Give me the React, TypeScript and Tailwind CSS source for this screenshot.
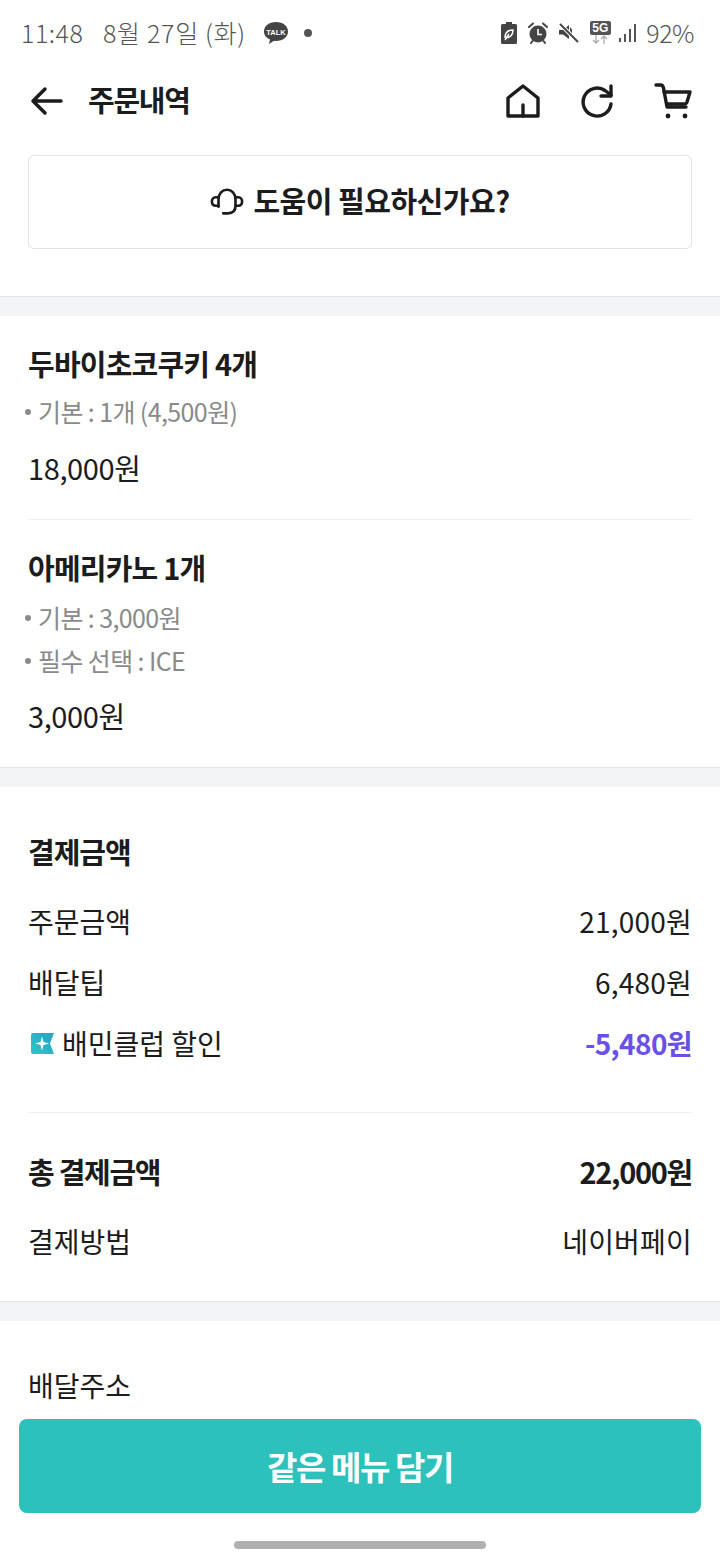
import React from 'react';

const font = { fontFamily: '"Noto Sans CJK KR", "Noto Sans", sans-serif' };

const StatusBar = () => (
  <div className="h-[66px] flex items-center justify-between pl-[21px] pr-[26px] pb-[1px] text-[#555]">
    <div className="flex items-center text-[25px] font-light leading-none">
      <span className="w-[82px] tracking-[0.5px]">11:48</span>
      <span className="tracking-[0.7px]">8월 27일 (화)</span>
      <svg className="ml-[17px]" width="26" height="24" viewBox="0 0 26 24">
        <path d="M13 1C6 1 1 5 1 10.500C1 14 3.300 17 7 18.500L6 23L11 19.800C11.700 20 12.300 20 13 20C20 20 25 15.800 25 10.500C25 5 20 1 13 1Z" fill="#444" />
        <text x="13" y="13.500" textAnchor="middle" fontSize="7.500" fontWeight="700" fill="#fff" fontFamily="Liberation Sans">TALK</text>
      </svg>
      <span className="ml-[15px] w-[8px] h-[8px] rounded-full bg-[#555]" />
    </div>
    <div className="flex items-center">
      <svg width="16" height="22" viewBox="0 0 16 22">
        <path d="M5 0H11V2H14.500A1.500 1.500 0 0 1 16 3.500V20.500A1.500 1.500 0 0 1 14.500 22H1.500A1.500 1.500 0 0 1 0 20.500V3.500A1.500 1.500 0 0 1 1.500 2H5Z" fill="#444" />
        <path d="M4 16C4 11 7 8 12 8C12 13 9 16 5.500 15.500M4 18L8 12" fill="none" stroke="#fff" strokeWidth="1.500" />
      </svg>
      <svg className="ml-[11px]" width="20" height="22" viewBox="0 0 20 22">
        <circle cx="10" cy="12" r="8.500" fill="#444" />
        <path d="M10 7V12.500H14" fill="none" stroke="#fff" strokeWidth="1.600" />
        <path d="M1 5L5 1.500M19 5L15 1.500M4.500 19L3 21M15.500 19L17 21" stroke="#444" strokeWidth="2" strokeLinecap="round" />
      </svg>
      <svg className="ml-[11px]" width="20" height="20" viewBox="0 0 20 20">
        <path d="M0 7H4L10 2V16L4 11.500H0Z" fill="#444" />
        <path d="M11 4L13 6.500V11L11 8Z" fill="#444" />
        <path d="M1 1L19 19" stroke="#fff" strokeWidth="4" />
        <path d="M1 1L19 19" stroke="#444" strokeWidth="2" />
      </svg>
      <div className="ml-[10px] flex flex-col items-center w-[22px]">
        <span className="w-[21px] h-[14px] rounded-[2px] bg-[#555] text-white text-[12px] font-bold leading-[14px] text-center" style={{ fontFamily: 'Liberation Sans' }}>5G</span>
        <svg width="16" height="9" viewBox="0 0 16 9">
          <path d="M4 0V8M1 5L4 8L7 5" fill="none" stroke="#aaa" strokeWidth="1.300" />
          <path d="M12 9V1M9 4L12 1L15 4" fill="none" stroke="#aaa" strokeWidth="1.300" />
        </svg>
      </div>
      <svg className="ml-[8px]" width="18" height="20" viewBox="0 0 18 20">
        <path d="M1 15V19M6 11V19M11 6V19M16 1V19" stroke="#555" strokeWidth="2" />
      </svg>
      <span className="ml-[9px] text-[25px] font-light leading-none tracking-[-0.5px]">92%</span>
    </div>
  </div>
);

const Header = () => (
  <div className="h-[70px] flex items-center justify-between pl-[30px] pr-[28px]">
    <div className="flex items-center">
      <svg width="34" height="34" viewBox="0 0 34 34" fill="none" stroke="#1c1c1c" strokeWidth="3.500" strokeLinecap="round" strokeLinejoin="round">
        <path d="M31 17H4M15 5L3 17L15 29" />
      </svg>
      <span className="ml-[24px] mb-[3px] text-[29px] font-bold tracking-[-1.3px] text-[#1c1c1c] leading-none">주문내역</span>
    </div>
    <div className="flex items-center gap-[40px]">
      <svg width="34" height="34" viewBox="0 0 34 34" fill="none" stroke="#1c1c1c" strokeWidth="3.400" strokeLinejoin="round">
        <path d="M2 14L17 2L32 14V32H2Z" />
        <path d="M17 32V21" strokeLinecap="round" />
      </svg>
      <svg width="34" height="34" viewBox="0 0 34 34" fill="none" stroke="#1c1c1c" strokeWidth="3.400" strokeLinecap="round" strokeLinejoin="round">
        <path d="M31 20A14 14 0 1 1 25 6.500L31 11" />
        <path d="M31 2V12H21" />
      </svg>
      <svg width="38" height="36" viewBox="0 0 38 36" fill="none" stroke="#1c1c1c" strokeWidth="3.400" strokeLinecap="round" strokeLinejoin="round">
        <path d="M2 2H7C8 2 9 3 9.500 5L13 24H32" />
        <path d="M10 9H36L33 19C32.500 20.500 31.500 21 30 21H13" />
        <circle cx="14" cy="33" r="2.400" fill="#1c1c1c" stroke="none" />
        <circle cx="31" cy="33" r="2.400" fill="#1c1c1c" stroke="none" />
      </svg>
    </div>
  </div>
);

const Gap = () => <div className="h-[20px] bg-[#f3f4f6] border-t border-[#e4e5e7]" />;

const Option = ({ children }: { children: React.ReactNode }) => (
  <div className="h-[43px] flex items-center text-[25px] text-[#8a8a8a] tracking-[-0.6px] leading-none">
    <span className="ml-[-3px] mr-[7px] w-[6px] h-[6px] rounded-full bg-[#8a8a8a]" />
    {children}
  </div>
);

const Row = ({ label, value, className }: { label: React.ReactNode; value: string; className?: string }) => (
  <div className={`flex items-center justify-between text-[28px] leading-none text-[#1c1c1c] ${className ?? ''}`}>
    <span className="flex items-center">{label}</span>
    <span className="tracking-[0.2px]">{value}</span>
  </div>
);

export default function App() {
  return (
    <div className="relative w-[720px] h-[1560px] overflow-hidden bg-white" style={font}>
      <StatusBar />
      <Header />

      <div className="px-[28px] pt-[19px] pb-[47px]">
        <div className="h-[94px] border border-[#e2e3e5] rounded-[6px] flex items-center justify-center">
          <svg width="34" height="30" viewBox="0 0 36 30" fill="none" stroke="#1c1c1c" strokeWidth="2.800" strokeLinecap="round" strokeLinejoin="round">
            <path d="M9 20V12C9 6 13 2 18 2C23 2 27 6 27 12V19C27 24 24 27 19 27H14" />
            <path d="M9 10H6C3.500 10 2 12 2 14.500C2 17 3.500 19 6 19H9" />
            <path d="M27 10H30C32.500 10 34 12 34 14.500C34 17 32.500 19 30 19H27" />
          </svg>
          <span className="ml-[9px] mb-[3px] text-[29px] font-bold tracking-[-0.5px] text-[#1c1c1c] leading-none">도움이 필요하신가요?</span>
        </div>
      </div>

      <Gap />

      <div className="px-[28px]">
        <div className="pt-[29px] pb-[34px] border-b border-[#eeeff1]">
          <div className="h-[36px] flex items-center text-[29px] font-bold tracking-[-0.8px] text-[#1c1c1c] leading-none">두바이초코쿠키 4개</div>
          <div className="mt-[9px]">
            <Option>기본 : 1개 (4,500원)</Option>
          </div>
          <div className="mt-[16px] h-[36px] flex items-center text-[29px] tracking-[-0.4px] text-[#1c1c1c] leading-none">18,000원</div>
        </div>
        <div className="pt-[29px] pb-[34px]">
          <div className="h-[36px] flex items-center text-[29px] font-bold tracking-[-0.8px] text-[#1c1c1c] leading-none">아메리카노 1개</div>
          <div className="mt-[11px]">
            <Option>기본 : 3,000원</Option>
            <Option>필수 선택 : ICE</Option>
          </div>
          <div className="mt-[15px] h-[36px] flex items-center text-[29px] tracking-[-0.4px] text-[#1c1c1c] leading-none">3,000원</div>
        </div>
      </div>

      <Gap />

      <div className="px-[28px]">
        <div className="pt-[46px] pb-[51px] border-b border-[#eeeff1]">
          <div className="h-[36px] flex items-center text-[29px] font-bold tracking-[-1px] text-[#1c1c1c] leading-none">결제금액</div>
          <div className="mt-[34px] flex flex-col gap-[25px]">
            <Row className="h-[36px]" label="주문금액" value="21,000원" />
            <Row className="h-[36px]" label="배달팁" value="6,480원" />
            <div className="h-[36px] flex items-center justify-between text-[28px] leading-none text-[#1c1c1c]">
              <span className="flex items-center">
                <svg className="ml-[3px] mr-[8px]" width="23" height="21" viewBox="0 0 23 21">
                  <defs>
                    <linearGradient id="club" x1="0" y1="1" x2="1" y2="0">
                      <stop offset="0" stopColor="#2cc8c8" />
                      <stop offset="1" stopColor="#2a9fc4" />
                    </linearGradient>
                  </defs>
                  <path d="M2 0H23L19 10.500L23 21H2Q0 21 0 19V2Q0 0 2 0Z" fill="url(#club)" />
                  <path d="M11 3.500L12.500 9L18 10.500L12.500 12L11 17.500L9.500 12L4 10.500L9.500 9Z" fill="#fff" />
                </svg>
                배민클럽 할인
              </span>
              <span className="font-bold text-[#6a4fe8] tracking-[-0.6px]">-5,480원</span>
            </div>
          </div>
        </div>
        <div className="pt-[40px] pb-[42px]">
          <div className="h-[36px] flex items-center justify-between text-[29px] font-bold tracking-[-1.3px] text-[#1c1c1c] leading-none">
            <span>총 결제금액</span>
            <span>22,000원</span>
          </div>
          <Row className="mt-[34px] h-[36px]" label="결제방법" value="네이버페이" />
        </div>
      </div>

      <Gap />

      <div className="px-[28px] pt-[46px]">
        <Row className="h-[36px]" label="배달주소" value="" />
      </div>

      <div className="absolute left-0 right-0 bottom-0 h-[142px] bg-white px-[19px] pt-[1px]">
        <div className="h-[94px] bg-[#2cc1bb] rounded-[8px] flex items-center justify-center text-white text-[33px] font-bold tracking-[-1.4px] leading-none">같은 메뉴 담기</div>
        <div className="mt-[28px] mx-auto w-[252px] h-[8px] rounded-full bg-[#b0b0b0]" />
      </div>
    </div>
  );
}
